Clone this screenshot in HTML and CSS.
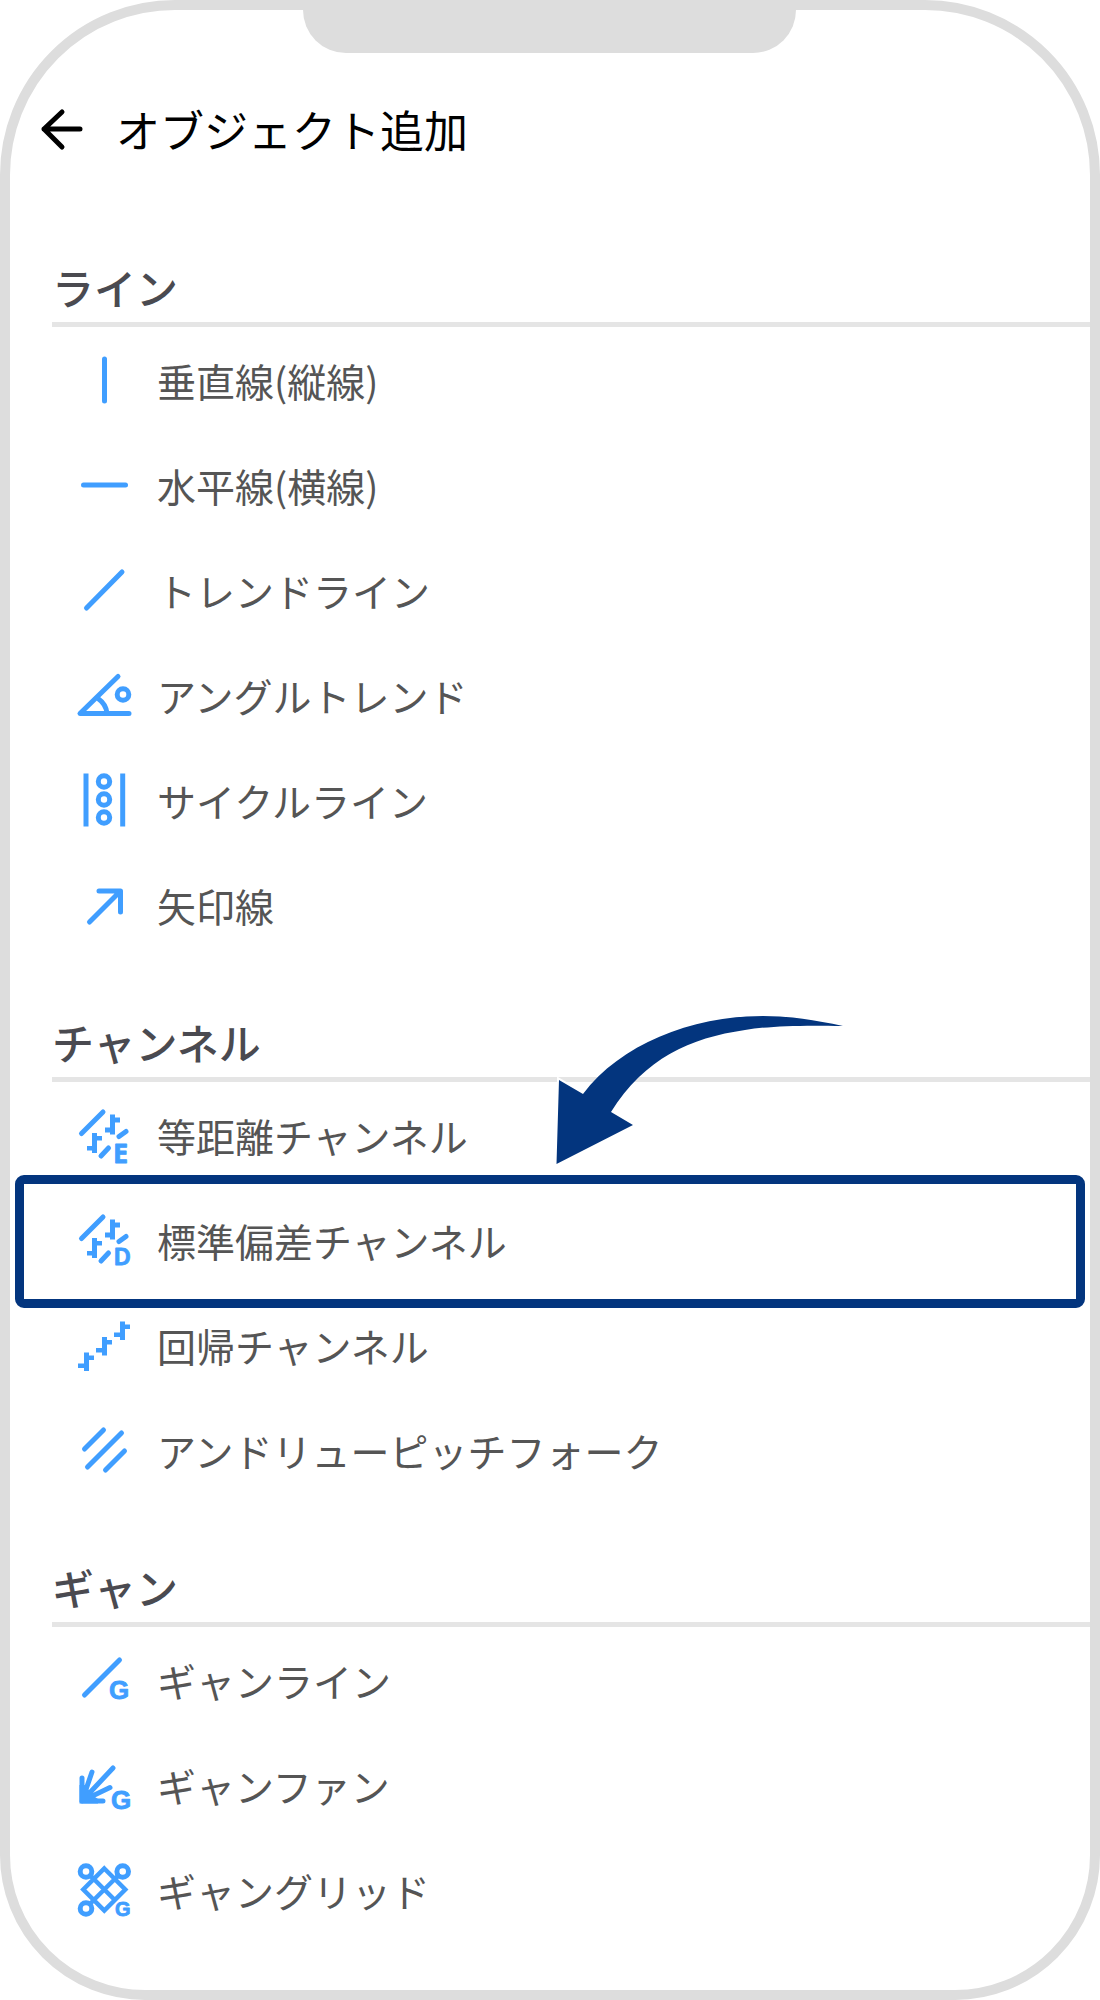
FILE: index.html
```html
<!DOCTYPE html>
<html lang="ja">
<head>
    <meta charset="UTF-8">
    <meta name="viewport" content="width=device-width, initial-scale=1.0">
    <title>オブジェクト追加</title>
    <link rel="stylesheet" href="styles.css">
</head>
<body>
    <div class="phone">
        <div class="notch"></div>

        <div class="topbar">
            <svg class="back" width="44" height="44" viewBox="0 0 44 44">
                <path d="M4 22H40M22 5L4 22L22 40"/>
            </svg>
            <span class="title">オブジェクト追加</span>
        </div>

        <h2 class="section first">ライン</h2>
        <div class="row">
            <svg class="icon" viewBox="0 0 60 60"><path d="M30.5 9V51"/></svg>
            <span>垂直線(縦線)</span>
        </div>
        <div class="row">
            <svg class="icon" viewBox="0 0 60 60"><path d="M9.500 30H51.500"/></svg>
            <span>水平線(横線)</span>
        </div>
        <div class="row">
            <svg class="icon" viewBox="0 0 60 60"><path d="M12.500 48L48 12"/></svg>
            <span>トレンドライン</span>
        </div>
        <div class="row">
            <svg class="icon" viewBox="0 0 60 60">
                <path d="M44 11.500L6 48.500H55M24 33.500C29 37 32.500 42 33 48.500"/>
                <circle cx="49" cy="29.500" r="5.800"/>
            </svg>
            <span>アングルトレンド</span>
        </div>
        <div class="row">
            <svg class="icon" viewBox="0 0 60 60">
                <path class="square" d="M12 3.500V56.500M48.700 3.500V56.500"/>
                <circle cx="30" cy="11.500" r="5.700"/>
                <circle cx="30" cy="29.500" r="5.700"/>
                <circle cx="30" cy="47.500" r="5.700"/>
            </svg>
            <span>サイクルライン</span>
        </div>
        <div class="row">
            <svg class="icon" viewBox="0 0 60 60"><path d="M15.500 47L46 16.500M25 16H46.500V37"/></svg>
            <span>矢印線</span>
        </div>

        <h2 class="section">チャンネル</h2>
        <div class="row">
            <svg class="icon" viewBox="0 0 60 60">
                <path d="M7.500 28.500L29 7M45 31.500L52 26.500M27 51L34.500 43"/>
                <path class="fill" d="M36 9.500H41V12.500H46V17.500H41V29.500H36V27.500H31V22.500H36ZM18 28H23V31H28V35.500H23V48H18V45.500H13V41H18Z"/>
                <text class="letter narrow" x="39" y="57.500" font-size="27">E</text>
            </svg>
            <span>等距離チャンネル</span>
        </div>
        <div class="row">
            <svg class="icon" viewBox="0 0 60 60">
                <path d="M7.500 28.500L29 7M45 31.500L52 26.500M27 51L34.500 43"/>
                <path class="fill" d="M36 9.500H41V12.500H46V17.500H41V29.500H36V27.500H31V22.500H36ZM18 28H23V31H28V35.500H23V48H18V45.500H13V41H18Z"/>
                <text class="letter" x="40" y="55" font-size="23">D</text>
            </svg>
            <span>標準偏差チャンネル</span>
        </div>
        <div class="row">
            <svg class="icon" viewBox="0 0 60 60">
                <path class="fill" d="M10 37.500H15V40.500H20V45H15V56H10V53H4V48.500H10ZM28 22H33V25H38V29.500H33V40.500H28V37.500H22V33H28ZM46 6.500H51V9.500H56V14H51V25H46V22H40V17.500H46Z"/>
            </svg>
            <span>回帰チャンネル</span>
        </div>
        <div class="row">
            <svg class="icon" viewBox="0 0 60 60"><path d="M10.500 29L29.500 10M13.500 47L47.500 13M31.500 50L50.500 31"/></svg>
            <span>アンドリューピッチフォーク</span>
        </div>

        <h2 class="section">ギャン</h2>
        <div class="row">
            <svg class="icon" viewBox="0 0 60 60">
                <path d="M10.500 45L45.500 10"/>
                <text class="letter" x="35" y="49" font-size="26">G</text>
            </svg>
            <span>ギャンライン</span>
        </div>
        <div class="row">
            <svg class="icon" viewBox="0 0 60 60">
                <path d="M8 46V23M8 46L18 17M8 46L39 13M8 46L36 32.500M8 46H29"/>
                <path class="fill" d="M5.500 30V48.500H24V44L18 40L14 34L10.500 30Z"/>
                <text class="letter" x="37" y="54" font-size="26">G</text>
            </svg>
            <span>ギャンファン</span>
        </div>
        <div class="row">
            <svg class="icon" viewBox="0 0 60 60">
                <path class="thin" d="M30.300 8.500L51.300 29.500L30.300 50.500L9.300 29.500ZM19.800 19L40.800 40M40.800 19L19.800 40M16 15.500L19.800 19M44.500 15.500L40.800 19M16 44L19.800 40"/>
                <circle cx="12" cy="11.500" r="5.800"/>
                <circle cx="48.700" cy="11.500" r="5.800"/>
                <circle cx="12" cy="48.500" r="5.800"/>
                <text class="letter" x="41" y="56" font-size="20">G</text>
            </svg>
            <span>ギャングリッド</span>
        </div>

        <div class="highlight"></div>
        <svg class="pointer" width="1100" height="2000" viewBox="0 0 1100 2000">
            <path class="edge" d="M583 1094L559 1080L556.500 1164"/>
            <path d="M583 1094C620 1045 690 1016 763 1016C790 1016 815 1020 843 1026C800 1025 770 1026 745 1030C690 1038 645 1058 611 1112L633 1125L556.500 1164L559 1080Z"/>
        </svg>
    </div>
</body>
</html>
```

FILE: styles.css
```css
body {
    margin: 0;
    background-color: white;
    font-family: "Noto Sans CJK JP", "Noto Sans", sans-serif;
}

.phone {
    position: relative;
    box-sizing: border-box;
    width: 1100px;
    height: 2000px;
    border: 10px solid #dddddd;
    border-radius: 175px 175px 145px 145px;
    overflow: hidden;
}

.notch {
    position: absolute;
    top: 0;
    left: 293px;
    width: 493px;
    height: 43px;
    background-color: #dddddd;
    border-radius: 0 0 44px 44px;
}

.topbar {
    display: flex;
    align-items: center;
    height: 44px;
    padding: 97px 0 0 30px;
}

.back {
    fill: none;
    stroke: black;
    stroke-width: 5;
    stroke-linecap: round;
    stroke-linejoin: round;
}

.title {
    margin-left: 32px;
    font-size: 44px;
    color: black;
}

.section {
    box-sizing: border-box;
    height: 125px;
    margin: 0 0 0 42px;
    padding-top: 55px;
    border-bottom: 5px solid #e5e5e5;
    font-size: 42px;
    font-weight: 500;
    line-height: 60px;
    color: #4a4a50;
}

.section.first {
    margin-top: 51px;
}

.row {
    display: flex;
    align-items: center;
    gap: 23px;
    height: 105px;
    padding-left: 64px;
    font-size: 39px;
    color: #555555;
}

.icon {
    width: 60px;
    height: 60px;
    flex-shrink: 0;
    overflow: visible;
    fill: none;
    stroke: #409eff;
    stroke-width: 5;
    stroke-linecap: round;
    stroke-linejoin: round;
}

.icon .square {
    stroke-linecap: butt;
}

.icon .thin {
    stroke-width: 4.5;
    stroke-linejoin: miter;
}

.icon .fill {
    fill: #409eff;
    stroke: none;
}

.icon .letter {
    fill: #409eff;
    stroke: #409eff;
    stroke-width: 0.8;
    font-family: "Liberation Sans", sans-serif;
    font-weight: 700;
}

.icon .letter.narrow {
    font-family: "Noto Sans", sans-serif;
}

.highlight {
    position: absolute;
    top: 1165px;
    left: 5px;
    box-sizing: border-box;
    width: 1070px;
    height: 133px;
    border: 9px solid #03357e;
    border-radius: 9px;
}

.pointer {
    position: absolute;
    top: -10px;
    left: -10px;
    fill: #03357e;
}

.pointer .edge {
    fill: none;
    stroke: white;
    stroke-width: 4;
}
```
